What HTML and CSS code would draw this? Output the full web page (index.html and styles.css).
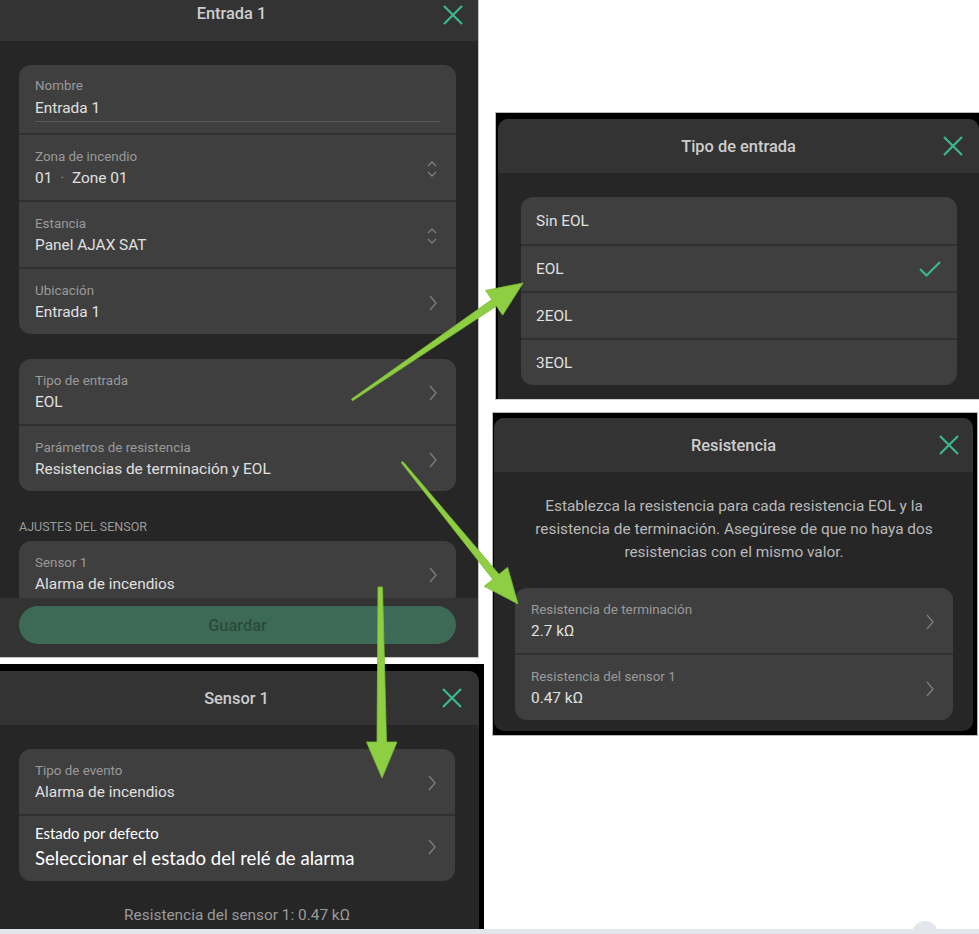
FILE: index.html
```html
<!DOCTYPE html>
<html lang="es">
<head>
    <meta charset="UTF-8">
    <meta name="viewport" content="width=device-width, initial-scale=1.0">
    <title>Entrada 1 - ajustes</title>
    <link rel="stylesheet" href="styles.css">
</head>
<body>
    <div class="board">
        <div class="columns">
            <!-- columna izquierda: entrada y sensor -->
            <div class="col col-left">
                <section class="shot shot-entrada">
                    <header class="sheet-head">
                        <h2>Entrada 1</h2>
                        <span class="close">
                            <svg width="20" height="20" viewBox="0 0 20 20"><path d="M1 1L19 19M19 1L1 19" /></svg>
                        </span>
                    </header>
                    <div class="sheet-body">
                        <div class="card">
                            <div class="row row-name">
                                <div class="row-text">
                                    <span class="label">Nombre</span>
                                    <span class="value value-field">Entrada 1</span>
                                </div>
                            </div>
                            <div class="row">
                                <div class="row-text">
                                    <span class="label">Zona de incendio</span>
                                    <span class="value">01 <span class="dot">·</span> Zone 01</span>
                                </div>
                                <svg class="icon-sort" width="10" height="16" viewBox="0 0 10 16"><path d="M1 5L5 1L9 5M1 11L5 15L9 11" /></svg>
                            </div>
                            <div class="row">
                                <div class="row-text">
                                    <span class="label">Estancia</span>
                                    <span class="value">Panel AJAX SAT</span>
                                </div>
                                <svg class="icon-sort" width="10" height="16" viewBox="0 0 10 16"><path d="M1 5L5 1L9 5M1 11L5 15L9 11" /></svg>
                            </div>
                            <div class="row">
                                <div class="row-text">
                                    <span class="label">Ubicación</span>
                                    <span class="value">Entrada 1</span>
                                </div>
                                <svg class="icon-chev" width="8" height="16" viewBox="0 0 8 16"><path d="M1 1L7 8L1 15" /></svg>
                            </div>
                        </div>

                        <div class="card card-gap">
                            <div class="row">
                                <div class="row-text">
                                    <span class="label">Tipo de entrada</span>
                                    <span class="value">EOL</span>
                                </div>
                                <svg class="icon-chev" width="8" height="16" viewBox="0 0 8 16"><path d="M1 1L7 8L1 15" /></svg>
                            </div>
                            <div class="row">
                                <div class="row-text">
                                    <span class="label">Parámetros de resistencia</span>
                                    <span class="value">Resistencias de terminación y EOL</span>
                                </div>
                                <svg class="icon-chev" width="8" height="16" viewBox="0 0 8 16"><path d="M1 1L7 8L1 15" /></svg>
                            </div>
                        </div>

                        <p class="section-title">AJUSTES DEL SENSOR</p>
                        <div class="card">
                            <div class="row">
                                <div class="row-text">
                                    <span class="label">Sensor 1</span>
                                    <span class="value">Alarma de incendios</span>
                                </div>
                                <svg class="icon-chev" width="8" height="16" viewBox="0 0 8 16"><path d="M1 1L7 8L1 15" /></svg>
                            </div>
                        </div>
                    </div>
                    <footer class="sheet-foot">
                        <button class="btn-save">Guardar</button>
                    </footer>
                </section>

                <section class="shot shot-sensor">
                    <div class="sheet">
                        <header class="sheet-head">
                            <h2>Sensor 1</h2>
                            <span class="close">
                                <svg width="20" height="20" viewBox="0 0 20 20"><path d="M1 1L19 19M19 1L1 19" /></svg>
                            </span>
                        </header>
                        <div class="sheet-body">
                            <div class="card">
                                <div class="row">
                                    <div class="row-text">
                                        <span class="label">Tipo de evento</span>
                                        <span class="value">Alarma de incendios</span>
                                    </div>
                                    <svg class="icon-chev" width="8" height="16" viewBox="0 0 8 16"><path d="M1 1L7 8L1 15" /></svg>
                                </div>
                                <div class="row row-note">
                                    <div class="row-text">
                                        <span class="note-label">Estado por defecto</span>
                                        <span class="note-value">Seleccionar el estado del relé de alarma</span>
                                    </div>
                                    <svg class="icon-chev" width="8" height="16" viewBox="0 0 8 16"><path d="M1 1L7 8L1 15" /></svg>
                                </div>
                            </div>
                            <p class="hint">Resistencia del sensor 1: 0.47 kΩ</p>
                        </div>
                    </div>
                </section>
            </div>

            <!-- columna derecha: tipo de entrada y resistencia -->
            <div class="col col-right">
                <section class="shot shot-tipo">
                    <div class="sheet">
                        <header class="sheet-head">
                            <h2>Tipo de entrada</h2>
                            <span class="close">
                                <svg width="20" height="20" viewBox="0 0 20 20"><path d="M1 1L19 19M19 1L1 19" /></svg>
                            </span>
                        </header>
                        <div class="sheet-body">
                            <div class="card card-options">
                                <div class="option">Sin EOL</div>
                                <div class="option">EOL
                                    <svg class="icon-check" width="22" height="16" viewBox="0 0 22 16"><path d="M1 8L7.5 14.5L21 1" /></svg>
                                </div>
                                <div class="option">2EOL</div>
                                <div class="option">3EOL</div>
                            </div>
                        </div>
                    </div>
                </section>

                <section class="shot shot-resist">
                    <div class="sheet">
                        <header class="sheet-head">
                            <h2>Resistencia</h2>
                            <span class="close">
                                <svg width="20" height="20" viewBox="0 0 20 20"><path d="M1 1L19 19M19 1L1 19" /></svg>
                            </span>
                        </header>
                        <div class="sheet-body">
                            <p class="desc">Establezca la resistencia para cada resistencia EOL y la<br>resistencia de terminación. Asegúrese de que no haya dos<br>resistencias con el mismo valor.</p>
                            <div class="card">
                                <div class="row">
                                    <div class="row-text">
                                        <span class="label">Resistencia de terminación</span>
                                        <span class="value">2.7 kΩ</span>
                                    </div>
                                    <svg class="icon-chev" width="8" height="16" viewBox="0 0 8 16"><path d="M1 1L7 8L1 15" /></svg>
                                </div>
                                <div class="row">
                                    <div class="row-text">
                                        <span class="label">Resistencia del sensor 1</span>
                                        <span class="value">0.47 kΩ</span>
                                    </div>
                                    <svg class="icon-chev" width="8" height="16" viewBox="0 0 8 16"><path d="M1 1L7 8L1 15" /></svg>
                                </div>
                            </div>
                        </div>
                    </div>
                </section>
            </div>
        </div>
        <div class="strip"></div>

        <!-- flechas que unen cada ajuste con su pantalla -->
        <svg class="arrows" width="979" height="934" viewBox="0 0 979 934">
            <polygon points="351.4,399.2 491.8,299.5 485.6,290.4 523,283 502.6,315.2 496.4,306.1 352.6,400.8" />
            <polygon points="401.2,462.6 492.8,579.3 484.2,586.3 518,604 507.6,567.3 499,574.3 402.8,461.4" />
            <polygon points="378,587 377,742 366.5,742 382,778 397,742 386.5,742 382.5,587" />
        </svg>
        <span class="fab"></span>
    </div>
</body>
</html>
```

FILE: styles.css
```css
* {
    margin: 0;
    padding: 0;
    box-sizing: border-box;
}

body {
    font-family: Roboto, "Liberation Sans", sans-serif;
    background: #fff;
    width: 979px;
    height: 934px;
    overflow: hidden;
}

.board {
    position: relative;
    width: 979px;
    height: 934px;
}

.columns {
    display: flex;
    height: 929px;
}

.col-left {
    flex: none;
    width: 492px;
}

.col-right {
    flex: 1;
    min-width: 0;
    padding-top: 112px;
}

/* capturas */
.shot {
    overflow: hidden;
    color: #e2e2e2;
}

.sheet {
    background: #262626;
    height: 100%;
    overflow: hidden;
}

.shot-entrada {
    width: 479px;
    height: 658px;
    background: #262626;
    border-right: 1px solid #c4c4c4;
    border-bottom: 1px solid #c4c4c4;
}

.shot-entrada .sheet-head {
    height: 41px;
    padding: 0 15px 0 0;
    align-items: flex-start;
}

.shot-entrada .sheet-head h2 {
    line-height: 28px;
}

.shot-entrada .close {
    top: 5px;
}

.shot-entrada .sheet-body {
    height: 557px;
    overflow: hidden;
    padding: 24px 22px 0 19px;
}

.shot-sensor {
    width: 484px;
    height: 265px;
    margin-top: 6px;
    background: #000;
    padding: 7px 5px 0 0;
}

.shot-sensor .sheet {
    border-radius: 0 10px 0 0;
}

.shot-sensor .sheet-head {
    padding-right: 6px;
}

.shot-sensor .close {
    right: 17px;
}

.shot-sensor .sheet-body {
    padding: 24px 24px 0 19px;
}

.shot-tipo {
    width: 484px;
    height: 288px;
    margin-left: 3px;
    background: #000;
    border-top: 1px solid #b8b8b8;
    border-left: 1px solid #b8b8b8;
    border-bottom: 1px solid #d0d0d0;
    padding: 6px 0 0 2px;
}

.shot-tipo .sheet {
    border-radius: 10px 10px 0 0;
}

.shot-tipo .close {
    right: 16px;
}

.shot-tipo .sheet-body {
    padding: 24px 22px 0 23px;
}

.shot-resist {
    width: 486px;
    height: 324px;
    margin-top: 12px;
    background: #000;
    border: 1px solid #b8b8b8;
    padding: 5px 4px 4px 1px;
}

.shot-resist .sheet {
    border-radius: 10px;
}

.shot-resist .close {
    right: 14px;
}

.shot-resist .sheet-body {
    padding: 23px 20px 0 21px;
}

/* cabecera */
.sheet-head {
    position: relative;
    display: flex;
    justify-content: center;
    align-items: center;
    height: 54px;
    background: #333;
}

.sheet-head h2 {
    font-size: 16.4px;
    font-weight: 500;
    color: #cdcdcd;
}

.close {
    position: absolute;
    right: 15px;
    top: 17px;
    width: 20px;
    height: 20px;
}

.close svg path {
    stroke: #3cb98b;
    stroke-width: 2.2;
    fill: none;
}

/* tarjetas */
.card {
    background: #3f3f3f;
    border-radius: 12px;
    overflow: hidden;
}

.card-gap {
    margin-top: 25px;
}

.row {
    display: flex;
    align-items: center;
    justify-content: space-between;
    height: 65px;
    padding: 2px 19px 0 16px;
}

.row + .row {
    height: 67px;
    border-top: 2px solid #303030;
}

.row-text {
    display: flex;
    flex-direction: column;
    gap: 1px;
}

.label {
    font-size: 13.4px;
    line-height: 18px;
    color: #9a9a9a;
}

.value {
    font-size: 15.4px;
    line-height: 22px;
    color: #e0e0e0;
}

.dot {
    color: #888;
    margin: 0 4px;
}

.row-name {
    height: 68px;
    padding: 0 16px;
    align-items: flex-start;
}

.row-name .row-text {
    width: 100%;
    padding-top: 12px;
    gap: 2px;
}

.value-field {
    padding-bottom: 2px;
    border-bottom: 1px solid #575757;
}

.icon-chev path,
.icon-sort path {
    stroke: #7c7c7c;
    stroke-width: 1.4;
    fill: none;
}

.section-title {
    margin: 27px 0 5px;
    font-size: 12.5px;
    line-height: 18px;
    color: #9a9a9a;
}

.sheet-foot {
    height: 59px;
    background: #333;
    padding: 8px 22px 0 19px;
}

.btn-save {
    width: 100%;
    height: 38px;
    border: none;
    border-radius: 19px;
    background: #3d6a57;
    color: #2a4a3b;
    font-family: inherit;
    font-size: 16.4px;
    font-weight: 500;
}

/* fila con texto de nota */
.row + .row-note {
    padding-top: 0;
    padding-bottom: 4px;
}

.row-note .row-text {
    gap: 4px;
}

.note-label {
    font-family: Lato, "Open Sans", sans-serif;
    font-size: 14.9px;
    line-height: 18px;
    color: #fff;
}

.note-value {
    font-family: Lato, "Open Sans", sans-serif;
    font-size: 18.6px;
    line-height: 24px;
    color: #fff;
}

.hint {
    margin-top: 24px;
    text-align: center;
    font-size: 15.4px;
    line-height: 20px;
    color: #9a9a9a;
}

/* lista de opciones */
.card-options {
    width: 436px;
}

.option {
    display: flex;
    align-items: center;
    justify-content: space-between;
    height: 47px;
    padding: 0 16px 0 15px;
    font-size: 15.4px;
    color: #e0e0e0;
}

.option + .option {
    border-top: 2px solid #303030;
    height: 47px;
}

.icon-check path {
    stroke: #3cb98b;
    stroke-width: 2;
    fill: none;
}

.desc {
    text-align: center;
    font-size: 15.4px;
    line-height: 23px;
    color: #b9b9b9;
    margin-bottom: 24px;
}

/* extras */
.strip {
    height: 5px;
    background: #e3e6ea;
}

.arrows {
    position: absolute;
    left: 0;
    top: 0;
    pointer-events: none;
}

.arrows polygon {
    fill: #8dce42;
    stroke: #7dbb36;
    stroke-width: 0.8;
}

.fab {
    position: absolute;
    left: 912px;
    top: 921px;
    width: 26px;
    height: 26px;
    border-radius: 50%;
    background: #e3e6ea;
}
```
